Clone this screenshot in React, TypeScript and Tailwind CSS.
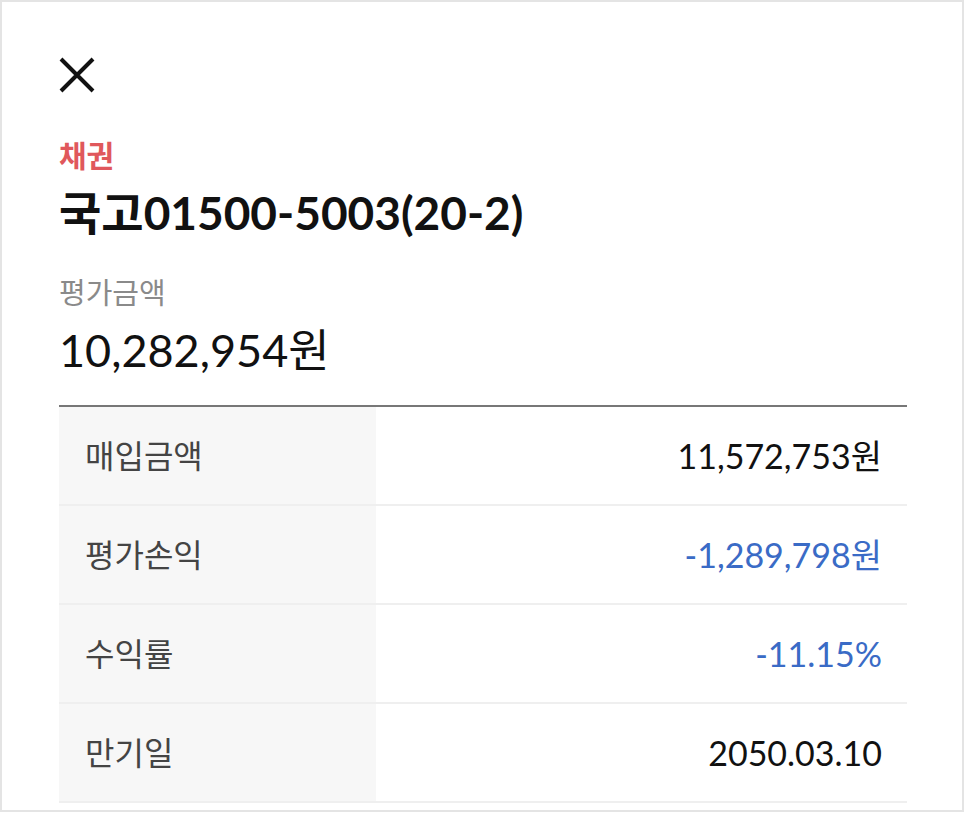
import React from "react";

const rows: { label: string; value: string; blue?: boolean }[] = [
  { label: "매입금액", value: "11,572,753원" },
  { label: "평가손익", value: "-1,289,798원", blue: true },
  { label: "수익률", value: "-11.15%", blue: true },
  { label: "만기일", value: "2050.03.10" },
];

export default function App() {
  return (
    <div
      className="w-[964px] h-[812px] border-2 border-[#e4e4e4] bg-white overflow-hidden"
      style={{ fontFamily: 'Lato, "Noto Sans CJK KR", sans-serif' }}
    >
      <div className="pl-[57px] pt-[54px] flex flex-col">
        <button className="w-[38px] h-[38px] -ml-[1px]" aria-label="close">
          <svg width="38" height="38" viewBox="0 0 38 38">
            <path d="M3 3 L35 35 M35 3 L3 35" stroke="#111" strokeWidth="4" fill="none" />
          </svg>
        </button>
        <div className="mt-[44px] h-[34px] leading-[34px] text-[30px] font-bold text-[#e0585c]">채권</div>
        <div className="mt-[16px] h-[50px] leading-[50px] text-[46px] font-bold text-[#111]">
          국고01500-5003(20-2)
        </div>
        <div className="mt-[38px] h-[34px] leading-[34px] text-[29px] text-[#8a8a8a]">평가금액</div>
        <div className="mt-[15px] h-[50px] leading-[50px] text-[45px] text-[#111]">10,282,954원</div>
        <div className="mt-[30px] w-[848px] border-t-2 border-[#777]">
          {rows.map((r) => (
            <div key={r.label} className="flex h-[99px] border-b-2 border-[#efefef]">
              <div className="w-[317px] bg-[#f7f7f7] flex items-center pl-[26px] text-[32px] text-[#444]">
                {r.label}
              </div>
              <div
                className={`flex-1 flex items-center justify-end pr-[25px] text-[34px] ${
                  r.blue ? "text-[#3a6bc6]" : "text-[#111]"
                }`}
              >
                {r.value}
              </div>
            </div>
          ))}
        </div>
      </div>
    </div>
  );
}
